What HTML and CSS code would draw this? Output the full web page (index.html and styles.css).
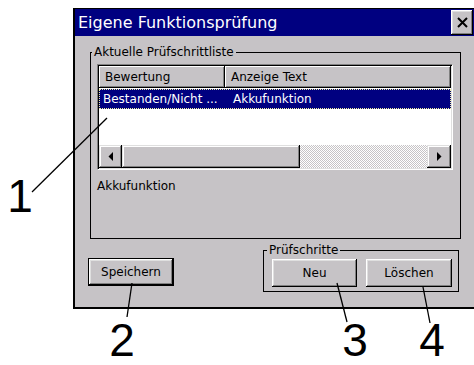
FILE: index.html
```html
<!DOCTYPE html>
<html lang="de">
<head>
    <meta charset="UTF-8">
    <title>Eigene Funktionsprüfung</title>
    <link rel="stylesheet" href="styles.css">
</head>
<body>
    <div class="dialog">
        <div class="titlebar">
            <span class="title">Eigene Funktionsprüfung</span>
            <span class="close">
                <svg width="11" height="11" viewBox="0 0 11 11"><path d="M1 1 L10 10 M10 1 L1 10" stroke="#000" stroke-width="2"/></svg>
            </span>
        </div>
        <div class="dialog-body">
            <fieldset class="group group-list">
                <legend>Aktuelle Prüfschrittliste</legend>
                <div class="listview">
                    <div class="lv-header">
                        <div class="lv-col lv-col1">Bewertung</div>
                        <div class="lv-col lv-col2">Anzeige Text</div>
                    </div>
                    <div class="lv-rows">
                        <div class="lv-row selected">
                            <span class="lv-cell lv-cell1">Bestanden/Nicht ...</span>
                            <span class="lv-cell">Akkufunktion</span>
                        </div>
                    </div>
                    <div class="hscroll">
                        <div class="sb-btn sb-left">
                            <svg width="5" height="9" viewBox="0 0 5 9"><polygon points="5,0 5,9 0.5,4.5" fill="#000"/></svg>
                        </div>
                        <div class="sb-thumb"></div>
                        <div class="sb-track"></div>
                        <div class="sb-btn sb-right">
                            <svg width="5" height="9" viewBox="0 0 5 9"><polygon points="0,0 0,9 4.5,4.5" fill="#000"/></svg>
                        </div>
                    </div>
                </div>
                <div class="detail">Akkufunktion</div>
            </fieldset>

            <div class="bottom-row">
                <button class="btn btn-default">Speichern</button>
                <fieldset class="group group-steps">
                    <legend>Prüfschritte</legend>
                    <div class="btn-row">
                        <button class="btn btn-neu">Neu</button>
                        <button class="btn btn-del">Löschen</button>
                    </div>
                </fieldset>
            </div>
        </div>
    </div>

    <!-- callout numbers and leader lines -->
    <svg class="callouts" width="474" height="365" viewBox="0 0 474 365">
        <g stroke="#000" stroke-width="1.3">
            <line x1="32" y1="192" x2="107" y2="118"/>
            <line x1="127" y1="317" x2="132" y2="283"/>
            <line x1="337" y1="283" x2="347" y2="322"/>
            <line x1="423" y1="287" x2="430" y2="323"/>
        </g>
        <g class="callout-num" text-anchor="middle">
            <text x="20" y="212">1</text>
            <text x="122" y="356">2</text>
            <text x="355" y="356">3</text>
            <text x="432" y="356">4</text>
        </g>
    </svg>
</body>
</html>
```

FILE: styles.css
```css
html, body {
    margin: 0;
    height: 100%;
}

body {
    position: relative;
    overflow: hidden;
    background: #ffffff;
    font-family: "DejaVu Sans", sans-serif;
    font-size: 12px;
    color: #000000;
}

.dialog {
    margin: 8px 0 0 73px;
    width: 400px;
    border-left: 2px solid #000000;
    border-top: 1px solid #000000;
    border-bottom: 2px solid #000000;
    background: #c6c3c6;
}

.titlebar {
    height: 27px;
    display: flex;
    align-items: center;
    padding-left: 3px;
    background: #000080;
    color: #ffffff;
}

.title {
    font-size: 16px;
}

.close {
    margin-left: auto;
    margin-right: 2px;
    width: 22px;
    height: 25px;
    display: flex;
    align-items: center;
    justify-content: center;
    background: #c6c3c6;
    box-shadow: inset -1px -1px #000000, inset 1px 1px #ffffff, inset -2px -2px #808080, inset 2px 2px #dfdfdf;
}

.dialog-body {
    height: 271px;
    box-sizing: border-box;
    padding: 9px 0 0 15px;
}

.group {
    margin: 0;
    min-width: 0;
    box-sizing: border-box;
    border: 1px solid #000000;
}

.group legend {
    padding: 0 2px;
    margin-left: -5px;
    line-height: 14px;
}

.group-list {
    width: 371px;
    height: 194px;
    padding: 5px 7px 0 6px;
}

.listview {
    width: 356px;
    height: 106px;
    box-sizing: border-box;
    display: flex;
    flex-direction: column;
    border: 1px solid;
    border-color: #808080 #ffffff #ffffff #808080;
    box-shadow: inset 1px 1px #000000, inset -1px -1px #dfdfdf;
    background: #ffffff;
    padding: 1px;
}

.lv-header {
    height: 22px;
    display: flex;
    flex-shrink: 0;
}

.lv-col {
    display: flex;
    align-items: center;
    padding-left: 6px;
    box-sizing: border-box;
    background: #c6c3c6;
    box-shadow: inset -1px -1px #000000, inset 1px 1px #ffffff, inset -2px -2px #808080;
}

.lv-col1 {
    width: 126px;
}

.lv-col2 {
    flex: 1;
}

.lv-rows {
    flex: 1;
    padding-top: 1px;
}

.lv-row {
    height: 20px;
    display: flex;
    align-items: center;
}

.lv-row.selected {
    background: #000080;
    color: #ffffff;
    outline: 1px dotted #f0f0a0;
    outline-offset: -1px;
}

.lv-cell {
    padding-left: 4px;
    white-space: nowrap;
}

.lv-cell1 {
    width: 126px;
}

.hscroll {
    height: 23px;
    display: flex;
    flex-shrink: 0;
}

.sb-btn,
.sb-thumb {
    display: flex;
    align-items: center;
    justify-content: center;
    background: #c6c3c6;
    box-shadow: inset -1px -1px #000000, inset 1px 1px #dfdfdf, inset -2px -2px #808080, inset 2px 2px #ffffff;
}

.sb-left {
    width: 23px;
}

.sb-right {
    width: 24px;
}

.sb-thumb {
    width: 178px;
}

.sb-track {
    flex: 1;
    background: repeating-conic-gradient(#c6c3c6 0 25%, #ffffff 0 50%) 0 0 / 2px 2px;
}

.detail {
    margin-top: 9px;
    line-height: 14px;
}

.bottom-row {
    width: 373px;
    margin-left: -2px;
    display: flex;
    justify-content: space-between;
    align-items: flex-start;
}

.btn {
    height: 28px;
    padding: 0;
    border: none;
    background: #c6c3c6;
    font-family: "DejaVu Sans", sans-serif;
    font-size: 12px;
    color: #000000;
    box-shadow: inset -1px -1px #000000, inset 1px 1px #ffffff, inset -2px -2px #808080, inset 2px 2px #dfdfdf;
}

.btn-default {
    width: 86px;
    margin-top: 19px;
    border: 1px solid #000000;
}

.group-steps {
    width: 196px;
    margin-top: 4px;
    margin-right: 2px;
    padding: 2px 6px 4px 8px;
}

.btn-row {
    display: flex;
    gap: 9px;
}

.btn-neu {
    width: 85px;
}

.btn-del {
    width: 86px;
}

.callouts {
    position: absolute;
    top: 0;
    left: 0;
    pointer-events: none;
}

.callout-num {
    font-family: "Liberation Sans", Arial, sans-serif;
    font-size: 46px;
}
```
